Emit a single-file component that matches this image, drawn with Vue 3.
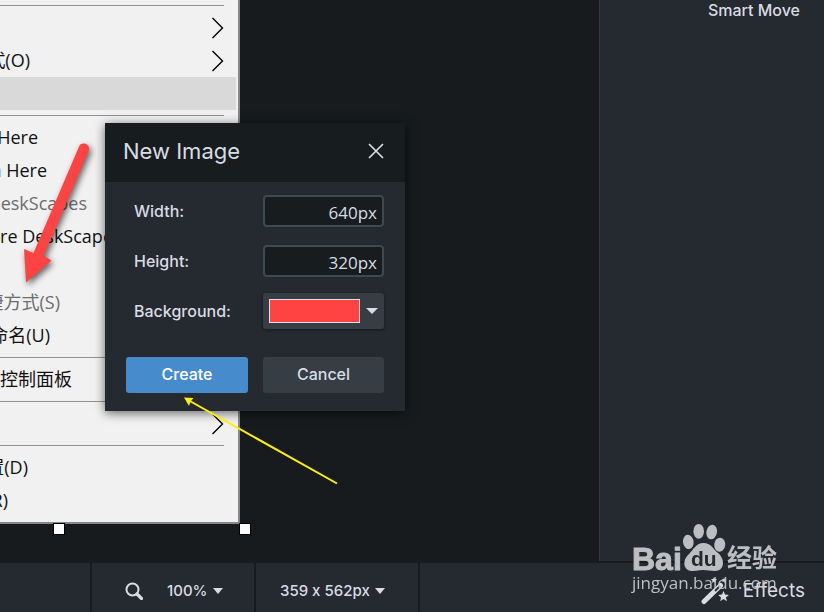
<script setup>
import { ref } from 'vue'

const width = ref('640px')
const height = ref('320px')
const background = ref('#ff4343')

const groups = [
  [
    { text: '', end: 0, submenu: true },
    { text: '式(O)', end: 30, submenu: true },
    { text: '', end: 0, active: true },
  ],
  [
    { text: 'Here', end: 38 },
    { text: 'n Here', end: 47 },
    { text: 'eskScapes', end: 87, muted: true },
    { text: 're DeskScape', end: 113 },
    { text: '', end: 0 },
    { text: '捷方式(S)', end: 60, muted: true },
    { text: '命名(U)', end: 50 },
  ],
  [{ text: '控制面板', end: 72 }],
  [{ text: '', end: 0, submenu: true }],
  [
    { text: '置(D)', end: 28 },
    { text: 'R)', end: 8 },
  ],
]
</script>

<template>
  <div class="app">
    <main class="workspace">
      <section class="canvas">
        <div class="picture">
          <ul v-for="(group, g) in groups" :key="g" class="group">
            <li v-for="(item, i) in group" :key="i" class="item" :class="{ active: item.active, muted: item.muted }">
              <span class="item-text" :style="{ width: item.end + 'px' }">{{ item.text }}</span>
              <svg v-if="item.submenu" class="chevron" viewBox="0 0 13 22" aria-hidden="true">
                <path d="M1.500 1 L11.500 11 L1.500 21" fill="none" stroke="#000" stroke-width="1.400" />
              </svg>
            </li>
          </ul>
          <i class="handle handle-mid"></i>
          <i class="handle handle-corner"></i>
        </div>
      </section>
      <aside class="sidebar">
        <a href="#" class="side-link">Smart Move</a>
      </aside>
    </main>

    <footer class="status">
      <div class="cell cell-first"></div>
      <div class="cell cell-zoom">
        <svg class="magnifier" viewBox="0 0 18 18" aria-hidden="true">
          <circle cx="7.500" cy="7.500" r="6" fill="none" stroke="currentColor" stroke-width="2" />
          <path d="M12 12 L16.500 16.500" stroke="currentColor" stroke-width="3.200" stroke-linecap="round" />
        </svg>
        <button type="button" class="drop">100%<i class="caret"></i></button>
      </div>
      <div class="cell cell-size">
        <button type="button" class="drop">359 x 562px<i class="caret"></i></button>
      </div>
      <div class="cell cell-last">
        <button type="button" class="effects">
          <svg class="wand" viewBox="0 0 28 30" aria-hidden="true">
            <path d="M3 25.500 L19.500 9.500" stroke="currentColor" stroke-width="5" stroke-linecap="round" />
            <path d="M14 15 L19 10" stroke="#252930" stroke-width="1.800" />
            <path d="M22.500 15l1.500 3.600 3.900.3-3 2.500 1 3.800-3.400-2.100-3.300 2.100.9-3.800-3-2.500 3.900-.3z" fill="currentColor" />
            <path d="M13 1l.9 2.100 2.300.2-1.800 1.500.6 2.200-2-1.200-2 1.200.6-2.200-1.800-1.500 2.300-.2zM23 1.500l.7 1.700 1.800.1-1.400 1.200.5 1.700-1.600-.9-1.500.9.4-1.700-1.400-1.200 1.900-.1z" fill="currentColor" />
          </svg>
          Effects
        </button>
      </div>
    </footer>

    <form class="dialog" role="dialog" aria-labelledby="dialog-title" @submit.prevent>
      <header class="dialog-head">
        <h1 id="dialog-title">New Image</h1>
        <button type="button" class="close" aria-label="Close">
          <svg viewBox="0 0 16 16" aria-hidden="true">
            <path d="M1 1 L15 15 M15 1 L1 15" stroke="currentColor" stroke-width="1.700" />
          </svg>
        </button>
      </header>
      <div class="dialog-body">
        <label for="w">Width:</label>
        <input id="w" v-model="width" class="field" type="text" />
        <label for="h">Height:</label>
        <input id="h" v-model="height" class="field" type="text" />
        <label for="bg">Background:</label>
        <button id="bg" type="button" class="color">
          <span class="swatch" :style="{ background }"></span>
          <i class="caret"></i>
        </button>
        <button type="submit" class="btn primary">Create</button>
        <button type="button" class="btn">Cancel</button>
      </div>
    </form>

    <svg class="annotations" viewBox="0 0 340 490" aria-hidden="true">
      <path class="red-arrow" d="M79.500 145.500 C81.500 141.500 90.500 143.500 89 150 L43.500 256 L51.500 260.500 L26 282.500 L24 249 L33.500 253 Z" />
      <path d="M188 400 L337 483.500" stroke="#fff200" stroke-width="2" />
      <path d="M184 397.500 L193.500 398 L190.500 401.500 L189 406 Z" fill="#fff200" />
    </svg>

    <div class="watermark">
      <svg viewBox="0 0 150 72" role="img" aria-label="Baidu">
        <g fill="#c6c7c9">
          <text class="wm-latin" x="0" y="46">Bai</text>
          <ellipse cx="56.300" cy="18" rx="5.300" ry="7.200" transform="rotate(-8 56 18)" />
          <ellipse cx="66.700" cy="7.300" rx="5.300" ry="7.400" />
          <ellipse cx="79.700" cy="8" rx="5.300" ry="7.300" transform="rotate(10 80 8)" />
          <ellipse cx="87.700" cy="20.700" rx="5.500" ry="7" transform="rotate(6 88 21)" />
          <path d="M71.500 19 C79 19 81 25 86 29 C94 36 92 47 83 47 C78 47 76 46 71.500 46 C67 46 65 47 59 47 C51 46 50 36 57 30 C62 25 64 19 71.500 19Z" />
          <text class="wm-cjk" x="95" y="43">经验</text>
          <text class="wm-url" x="0" y="65">jingyan.baidu.com</text>
        </g>
        <text class="wm-du" x="59" y="42">du</text>
      </svg>
    </div>
  </div>
</template>

<style>
body {
  margin: 0;
  background: #171b1e;
}
</style>

<style scoped>
.app {
  position: relative;
  display: flex;
  flex-direction: column;
  min-height: 100vh;
  overflow: hidden;
  color: #d9dce4;
  font-family: Inter, "Noto Sans CJK SC", sans-serif;
  font-size: 16px;
  font-feature-settings: "calt" 0;
}
button {
  padding: 0;
  border: 0;
  background: none;
  color: inherit;
  font: inherit;
  font-feature-settings: inherit;
}
.workspace {
  flex: 1;
  display: grid;
  grid-template-columns: 1fr 225px;
}
.canvas {
  background: #171b1e;
}
.picture {
  position: relative;
  box-sizing: border-box;
  width: 240px;
  border-right: 2px solid #858787;
  border-bottom: 2px solid #858787;
  background: #f1f1f1;
  color: #111;
  font-family: "Open Sans", "Noto Sans CJK SC", sans-serif;
  font-size: 18px;
}
.group {
  margin: 0;
  padding: 5px 2px 5px 0;
  list-style: none;
}
.group::before {
  content: "";
  display: block;
  height: 1px;
  margin: 0 12px 5px 0;
  background: #919191;
}
.group + .group {
  padding-top: 0;
}
.item {
  display: flex;
  align-items: center;
  justify-content: space-between;
  height: 33px;
  padding-right: 12px;
  line-height: 33px;
}
.item.active {
  background: #d9d9d9;
}
.item.muted {
  color: #6d6d6d;
}
.item-text {
  display: flex;
  justify-content: flex-end;
  white-space: nowrap;
}
.chevron {
  width: 13px;
  height: 22px;
}
.handle {
  position: absolute;
  bottom: -13px;
  width: 10px;
  height: 10px;
  border: 1px solid #000;
  background: #fff;
}
.handle-mid {
  left: 53px;
}
.handle-corner {
  right: -13px;
}
.sidebar {
  display: flex;
  align-items: flex-start;
  justify-content: flex-end;
  padding-right: 24px;
  border-left: 1px solid #33383c;
  background: #252930;
}
.side-link {
  color: inherit;
  font-weight: 500;
  line-height: 20px;
  text-decoration: none;
}
.status {
  display: flex;
  height: 49px;
  border-top: 2px solid #181b1f;
  background: #252930;
}
.cell {
  display: flex;
  box-sizing: border-box;
  align-items: center;
  padding-top: 6px;
  border-right: 2px solid #171b1e;
}
.cell-first {
  width: 92px;
}
.cell-zoom {
  width: 164px;
  gap: 24px;
  padding-left: 33px;
}
.cell-size {
  width: 164px;
  padding-left: 24px;
}
.cell-last {
  flex: 1;
  justify-content: flex-end;
  padding-right: 19px;
  border-right: 0;
}
.magnifier {
  width: 18px;
  height: 18px;
}
.drop {
  display: flex;
  align-items: center;
  gap: 5px;
  font-size: 15px;
  font-weight: 500;
}
.caret {
  flex: none;
  border: 5px solid transparent;
  border-top: 6px solid currentColor;
  border-bottom: 0;
}
.effects {
  display: flex;
  align-items: center;
  gap: 14px;
  font-size: 19px;
}
.wand {
  width: 28px;
  height: 30px;
}
.dialog {
  position: absolute;
  top: 123px;
  left: 105px;
  width: 300px;
  background: #252930;
  box-shadow: 0 2px 10px rgba(0, 0, 0, 0.6);
}
.dialog-head {
  display: flex;
  box-sizing: border-box;
  align-items: center;
  justify-content: space-between;
  height: 59px;
  padding: 0 21px 3px 18px;
  background: #171c1e;
}
.dialog-head h1 {
  margin: 0;
  font-size: 22px;
  font-weight: 400;
}
.close {
  width: 16px;
  height: 16px;
}
.close svg {
  display: block;
}
.dialog-body {
  display: grid;
  grid-template-columns: 122px 121px;
  grid-template-rows: 50px 50px 50px auto;
  column-gap: 15px;
  align-items: center;
  padding: 4px 21px 18px;
}
.dialog-body label {
  padding-left: 8px;
  font-weight: 500;
}
.field {
  box-sizing: border-box;
  width: 100%;
  height: 32px;
  padding: 2px 5px 0;
  border: 2px solid #3d4b50;
  border-radius: 4px;
  background: #171c1e;
  color: inherit;
  font-family: "Open Sans", sans-serif;
  font-size: 17px;
  text-align: right;
}
.color {
  display: flex;
  align-items: center;
  justify-content: space-between;
  height: 36px;
  padding: 0 6px;
  border-radius: 3px;
  background: #373d45;
  box-shadow: 0 1px 3px rgba(0, 0, 0, 0.4);
}
.swatch {
  box-sizing: border-box;
  width: 91px;
  height: 24px;
  border: 1px solid #dfe1e6;
}
.color .caret {
  border-width: 6px 6px 0;
}
.btn {
  height: 36px;
  margin-top: 21px;
  padding-bottom: 2px;
  border-radius: 3px;
  background: #373d45;
  font-weight: 500;
}
.btn.primary {
  background: #468ccc;
  color: #fff;
}
.annotations {
  position: absolute;
  top: 0;
  left: 0;
  width: 340px;
  height: 490px;
  pointer-events: none;
}
.red-arrow {
  fill: #ff4343;
  filter: drop-shadow(2px 3px 3px rgba(0, 0, 0, 0.6));
}
.watermark {
  position: absolute;
  right: 42px;
  bottom: 16px;
  width: 150px;
  height: 72px;
  opacity: 0.95;
  pointer-events: none;
}
.watermark svg {
  display: block;
  overflow: visible;
}
.wm-latin {
  font: 700 32px "Liberation Sans", sans-serif;
  stroke: #c6c7c9;
  stroke-width: 1;
}
.wm-cjk {
  font: 700 25px "Noto Sans CJK SC", sans-serif;
}
.wm-url {
  font: 400 17px "Open Sans", sans-serif;
}
.wm-du {
  fill: #252930;
  font: 700 21px "Liberation Sans", sans-serif;
}
</style>
